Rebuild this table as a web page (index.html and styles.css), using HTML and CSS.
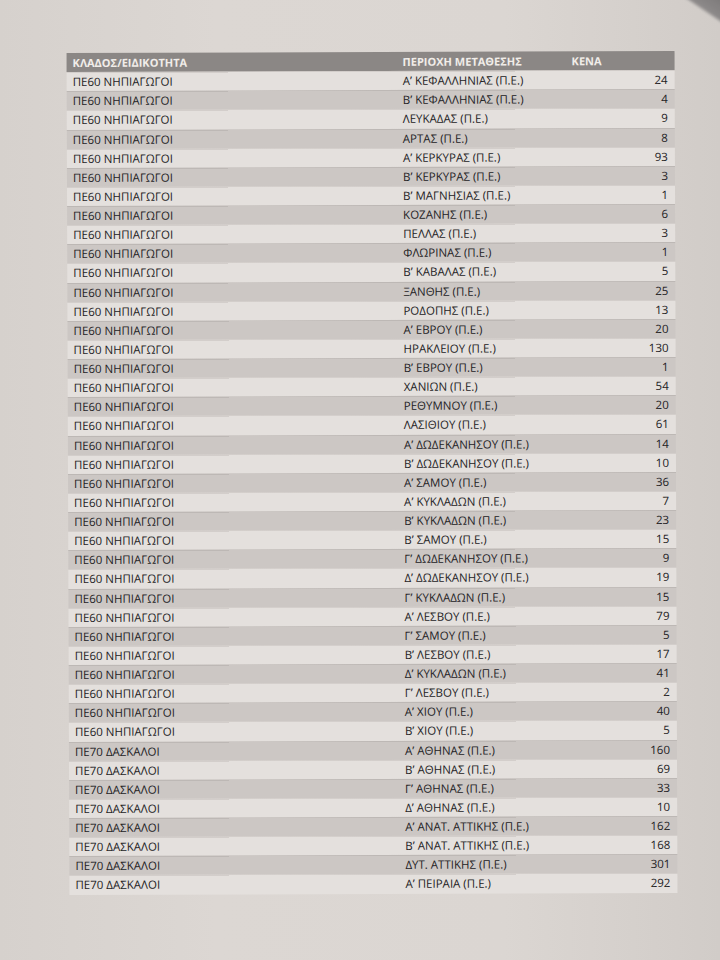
FILE: index.html
```html
<!DOCTYPE html>
<html lang="el">
<head>
<meta charset="utf-8">
<title>ΚΕΝΑ</title>
<link rel="stylesheet" href="styles.css">
</head>
<body>
<div class="corner"></div>
<div class="sheet">
<div class="grid">
<div class="row head"><span>ΚΛΑΔΟΣ/ΕΙΔΙΚΟΤΗΤΑ</span><span>ΠΕΡΙΟΧΗ ΜΕΤΑΘΕΣΗΣ</span><span>ΚΕΝΑ</span></div>
<div class="row"><span>ΠΕ60 ΝΗΠΙΑΓΩΓΟΙ</span><span>Αʹ ΚΕΦΑΛΛΗΝΙΑΣ (Π.Ε.)</span><span class="n">24</span></div>
<div class="row"><span>ΠΕ60 ΝΗΠΙΑΓΩΓΟΙ</span><span>Βʹ ΚΕΦΑΛΛΗΝΙΑΣ (Π.Ε.)</span><span class="n">4</span></div>
<div class="row"><span>ΠΕ60 ΝΗΠΙΑΓΩΓΟΙ</span><span>ΛΕΥΚΑΔΑΣ (Π.Ε.)</span><span class="n">9</span></div>
<div class="row"><span>ΠΕ60 ΝΗΠΙΑΓΩΓΟΙ</span><span>ΑΡΤΑΣ (Π.Ε.)</span><span class="n">8</span></div>
<div class="row"><span>ΠΕ60 ΝΗΠΙΑΓΩΓΟΙ</span><span>Αʹ ΚΕΡΚΥΡΑΣ (Π.Ε.)</span><span class="n">93</span></div>
<div class="row"><span>ΠΕ60 ΝΗΠΙΑΓΩΓΟΙ</span><span>Βʹ ΚΕΡΚΥΡΑΣ (Π.Ε.)</span><span class="n">3</span></div>
<div class="row"><span>ΠΕ60 ΝΗΠΙΑΓΩΓΟΙ</span><span>Βʹ ΜΑΓΝΗΣΙΑΣ (Π.Ε.)</span><span class="n">1</span></div>
<div class="row"><span>ΠΕ60 ΝΗΠΙΑΓΩΓΟΙ</span><span>ΚΟΖΑΝΗΣ (Π.Ε.)</span><span class="n">6</span></div>
<div class="row"><span>ΠΕ60 ΝΗΠΙΑΓΩΓΟΙ</span><span>ΠΕΛΛΑΣ (Π.Ε.)</span><span class="n">3</span></div>
<div class="row"><span>ΠΕ60 ΝΗΠΙΑΓΩΓΟΙ</span><span>ΦΛΩΡΙΝΑΣ (Π.Ε.)</span><span class="n">1</span></div>
<div class="row"><span>ΠΕ60 ΝΗΠΙΑΓΩΓΟΙ</span><span>Βʹ ΚΑΒΑΛΑΣ (Π.Ε.)</span><span class="n">5</span></div>
<div class="row"><span>ΠΕ60 ΝΗΠΙΑΓΩΓΟΙ</span><span>ΞΑΝΘΗΣ (Π.Ε.)</span><span class="n">25</span></div>
<div class="row"><span>ΠΕ60 ΝΗΠΙΑΓΩΓΟΙ</span><span>ΡΟΔΟΠΗΣ (Π.Ε.)</span><span class="n">13</span></div>
<div class="row"><span>ΠΕ60 ΝΗΠΙΑΓΩΓΟΙ</span><span>Αʹ ΕΒΡΟΥ (Π.Ε.)</span><span class="n">20</span></div>
<div class="row"><span>ΠΕ60 ΝΗΠΙΑΓΩΓΟΙ</span><span>ΗΡΑΚΛΕΙΟΥ (Π.Ε.)</span><span class="n">130</span></div>
<div class="row"><span>ΠΕ60 ΝΗΠΙΑΓΩΓΟΙ</span><span>Βʹ ΕΒΡΟΥ (Π.Ε.)</span><span class="n">1</span></div>
<div class="row"><span>ΠΕ60 ΝΗΠΙΑΓΩΓΟΙ</span><span>ΧΑΝΙΩΝ (Π.Ε.)</span><span class="n">54</span></div>
<div class="row"><span>ΠΕ60 ΝΗΠΙΑΓΩΓΟΙ</span><span>ΡΕΘΥΜΝΟΥ (Π.Ε.)</span><span class="n">20</span></div>
<div class="row"><span>ΠΕ60 ΝΗΠΙΑΓΩΓΟΙ</span><span>ΛΑΣΙΘΙΟΥ (Π.Ε.)</span><span class="n">61</span></div>
<div class="row"><span>ΠΕ60 ΝΗΠΙΑΓΩΓΟΙ</span><span>Αʹ ΔΩΔΕΚΑΝΗΣΟΥ (Π.Ε.)</span><span class="n">14</span></div>
<div class="row"><span>ΠΕ60 ΝΗΠΙΑΓΩΓΟΙ</span><span>Βʹ ΔΩΔΕΚΑΝΗΣΟΥ (Π.Ε.)</span><span class="n">10</span></div>
<div class="row"><span>ΠΕ60 ΝΗΠΙΑΓΩΓΟΙ</span><span>Αʹ ΣΑΜΟΥ (Π.Ε.)</span><span class="n">36</span></div>
<div class="row"><span>ΠΕ60 ΝΗΠΙΑΓΩΓΟΙ</span><span>Αʹ ΚΥΚΛΑΔΩΝ (Π.Ε.)</span><span class="n">7</span></div>
<div class="row"><span>ΠΕ60 ΝΗΠΙΑΓΩΓΟΙ</span><span>Βʹ ΚΥΚΛΑΔΩΝ (Π.Ε.)</span><span class="n">23</span></div>
<div class="row"><span>ΠΕ60 ΝΗΠΙΑΓΩΓΟΙ</span><span>Βʹ ΣΑΜΟΥ (Π.Ε.)</span><span class="n">15</span></div>
<div class="row"><span>ΠΕ60 ΝΗΠΙΑΓΩΓΟΙ</span><span>Γʹ ΔΩΔΕΚΑΝΗΣΟΥ (Π.Ε.)</span><span class="n">9</span></div>
<div class="row"><span>ΠΕ60 ΝΗΠΙΑΓΩΓΟΙ</span><span>Δʹ ΔΩΔΕΚΑΝΗΣΟΥ (Π.Ε.)</span><span class="n">19</span></div>
<div class="row"><span>ΠΕ60 ΝΗΠΙΑΓΩΓΟΙ</span><span>Γʹ ΚΥΚΛΑΔΩΝ (Π.Ε.)</span><span class="n">15</span></div>
<div class="row"><span>ΠΕ60 ΝΗΠΙΑΓΩΓΟΙ</span><span>Αʹ ΛΕΣΒΟΥ (Π.Ε.)</span><span class="n">79</span></div>
<div class="row"><span>ΠΕ60 ΝΗΠΙΑΓΩΓΟΙ</span><span>Γʹ ΣΑΜΟΥ (Π.Ε.)</span><span class="n">5</span></div>
<div class="row"><span>ΠΕ60 ΝΗΠΙΑΓΩΓΟΙ</span><span>Βʹ ΛΕΣΒΟΥ (Π.Ε.)</span><span class="n">17</span></div>
<div class="row"><span>ΠΕ60 ΝΗΠΙΑΓΩΓΟΙ</span><span>Δʹ ΚΥΚΛΑΔΩΝ (Π.Ε.)</span><span class="n">41</span></div>
<div class="row"><span>ΠΕ60 ΝΗΠΙΑΓΩΓΟΙ</span><span>Γʹ ΛΕΣΒΟΥ (Π.Ε.)</span><span class="n">2</span></div>
<div class="row"><span>ΠΕ60 ΝΗΠΙΑΓΩΓΟΙ</span><span>Αʹ ΧΙΟΥ (Π.Ε.)</span><span class="n">40</span></div>
<div class="row"><span>ΠΕ60 ΝΗΠΙΑΓΩΓΟΙ</span><span>Βʹ ΧΙΟΥ (Π.Ε.)</span><span class="n">5</span></div>
<div class="row"><span>ΠΕ70 ΔΑΣΚΑΛΟΙ</span><span>Αʹ ΑΘΗΝΑΣ (Π.Ε.)</span><span class="n">160</span></div>
<div class="row"><span>ΠΕ70 ΔΑΣΚΑΛΟΙ</span><span>Βʹ ΑΘΗΝΑΣ (Π.Ε.)</span><span class="n">69</span></div>
<div class="row"><span>ΠΕ70 ΔΑΣΚΑΛΟΙ</span><span>Γʹ ΑΘΗΝΑΣ (Π.Ε.)</span><span class="n">33</span></div>
<div class="row"><span>ΠΕ70 ΔΑΣΚΑΛΟΙ</span><span>Δʹ ΑΘΗΝΑΣ (Π.Ε.)</span><span class="n">10</span></div>
<div class="row"><span>ΠΕ70 ΔΑΣΚΑΛΟΙ</span><span>Αʹ ΑΝΑΤ. ΑΤΤΙΚΗΣ (Π.Ε.)</span><span class="n">162</span></div>
<div class="row"><span>ΠΕ70 ΔΑΣΚΑΛΟΙ</span><span>Βʹ ΑΝΑΤ. ΑΤΤΙΚΗΣ (Π.Ε.)</span><span class="n">168</span></div>
<div class="row"><span>ΠΕ70 ΔΑΣΚΑΛΟΙ</span><span>ΔΥΤ. ΑΤΤΙΚΗΣ (Π.Ε.)</span><span class="n">301</span></div>
<div class="row"><span>ΠΕ70 ΔΑΣΚΑΛΟΙ</span><span>Αʹ ΠΕΙΡΑΙΑ (Π.Ε.)</span><span class="n">292</span></div>
</div>
</div>
</body>
</html>
```
FILE: styles.css
```css
html, body {
  margin: 0;
  padding: 0;
}
body {
  width: 720px;
  height: 960px;
  overflow: hidden;
  background: linear-gradient(90deg, #d6d1cd 0%, #dcd7d3 30%, #dbd6d2 70%, #d1ccc8 100%);
  font-family: "Open Sans", "Noto Sans", sans-serif;
  color: #232224;
  position: relative;
}
.corner {
  position: absolute;
  top: -22px;
  right: -28px;
  width: 72px;
  height: 34px;
  background: linear-gradient(180deg, #6f6c6c, #8e8b8b);
  transform: rotate(34deg);
  filter: blur(1.5px);
}
.sheet {
  padding: 52px 0 0 68px;
}
.grid {
  width: 608px;
  display: flex;
  flex-direction: column;
  font-size: 11.5px;
  transform: rotate(-0.2deg);
  transform-origin: 50% 50%;
}
.row {
  display: grid;
  grid-template-columns: 330px 169px 109px;
  height: 19.14px;
  line-height: 19px;
  white-space: nowrap;
}
.row > span {
  padding: 0 6px;
}
.row > span.n {
  text-align: right;
  padding-right: 7px;
}
.row.head {
  background: #8b8785;
  color: #f1ede9;
  font-weight: 700;
  font-size: 11px;
}
.row:nth-child(even) {
  background: linear-gradient(180deg, #d3cecb 0, #d3cecb 1px, #e4e0dd 1px, #e4e0dd 100%);
}
.row:nth-child(odd):not(.head) {
  background: linear-gradient(180deg, #bdb8b5 0, #bdb8b5 1px, #ccc7c4 1px, #ccc7c4 100%);
}
```
